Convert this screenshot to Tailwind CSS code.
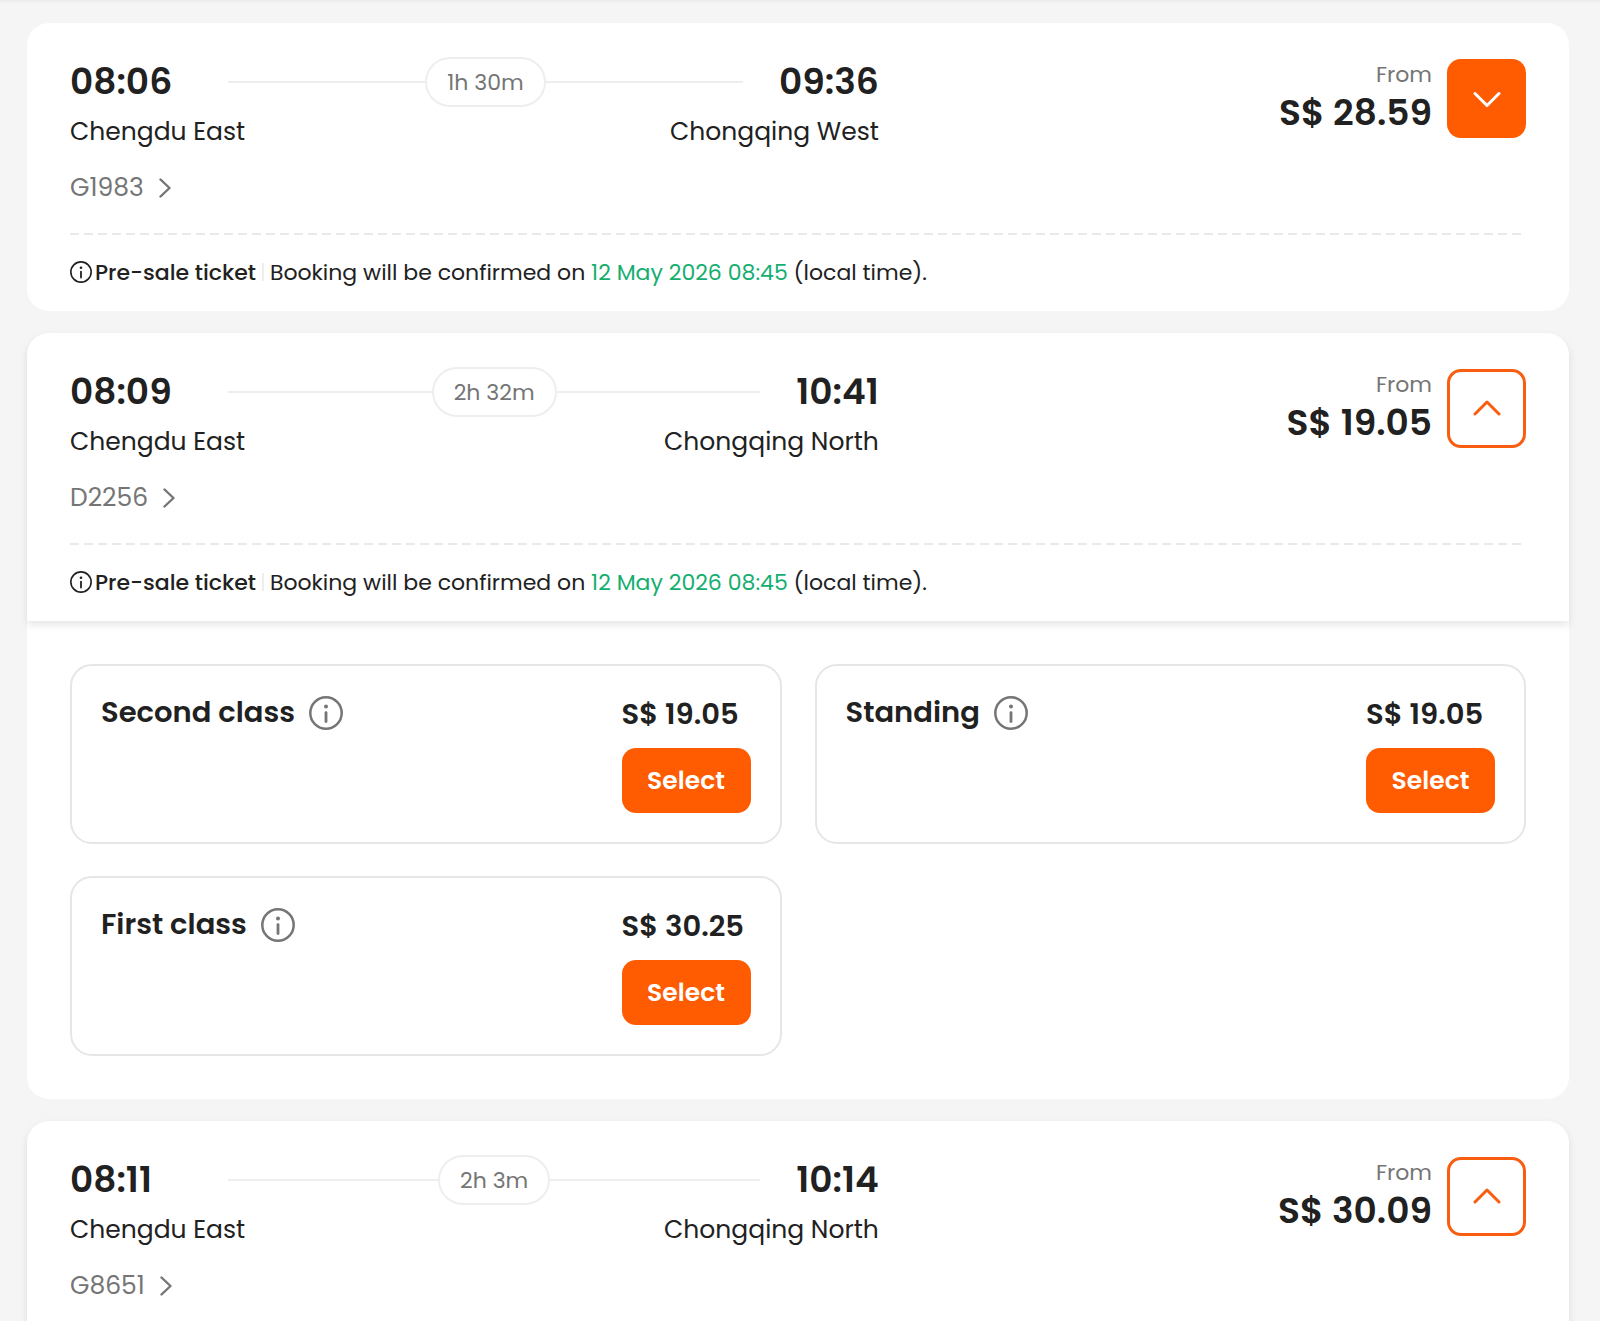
<!DOCTYPE html>
<html lang="en">
  <head>
    <meta charset="UTF-8" />
    <meta name="viewport" content="width=device-width, initial-scale=1.0" />
    <script src="https://cdn.jsdelivr.net/npm/@tailwindcss/browser@4"></script>
    <title>Chengdu to Chongqing trains</title>
  </head>
  <body
    class="bg-[#f5f5f5] text-[#212121] font-[Poppins,Inter,sans-serif] overflow-x-hidden"
  >
    <!-- icons -->
    <svg class="hidden">
      <symbol id="info" viewBox="0 0 34 34" fill="none">
        <circle cx="17" cy="17" r="15.7" stroke="currentColor" stroke-width="2.5" />
        <circle cx="17" cy="10.4" r="2" fill="currentColor" />
        <path d="M17 16.6v9" stroke="currentColor" stroke-width="2.8" stroke-linecap="round" />
      </symbol>
      <symbol id="down" viewBox="0 0 28 18" fill="none">
        <path d="M2 3.5l12 12 12-12" stroke="currentColor" stroke-width="3" stroke-linecap="round" stroke-linejoin="round" />
      </symbol>
      <symbol id="up" viewBox="0 0 28 18" fill="none">
        <path d="M2 14l12-12 12 12" stroke="currentColor" stroke-width="3" stroke-linecap="round" stroke-linejoin="round" />
      </symbol>
      <symbol id="right" viewBox="0 0 12 20" fill="none">
        <path d="M1.5 1.5l9 8.5-9 8.5" stroke="currentColor" stroke-width="2.4" stroke-linecap="round" stroke-linejoin="round" />
      </symbol>
    </svg>

    <!-- shadow of the bar above the list -->
    <div class="h-[3px] bg-linear-to-b from-[#ebebeb] to-[#f3f3f3]"></div>

    <main class="pt-5 pl-[27px] pr-[31px] space-y-[22px]">
      <!-- G1983 -->
      <article class="bg-white rounded-[22px]">
        <div class="px-[43px] pt-[34px]">
          <div class="flex justify-between items-start pb-[25px]">
            <div class="w-5/9">
              <div class="flex items-center h-[50px] gap-9">
                <p class="min-w-[122px] text-4xl font-semibold">08:06</p>
                <div class="flex flex-1 items-center">
                  <span class="flex-1 h-[2px] bg-[#eeeeee]"></span>
                  <span class="flex items-center h-[50px] px-5 border-2 border-[#eeeeee] rounded-full text-[22px] text-[#757575]">1h 30m</span>
                  <span class="flex-1 h-[2px] bg-[#eeeeee]"></span>
                </div>
                <p class="text-4xl font-semibold">09:36</p>
              </div>
              <div class="flex justify-between mt-[5px] text-[25px] leading-10">
                <p>Chengdu East</p>
                <p>Chongqing West</p>
              </div>
              <a href="#" class="inline-flex items-center gap-[15px] mt-4 h-10 text-[25px] leading-10 text-[#757575]">
                G1983
                <svg class="w-3 h-5"><use href="#right" /></svg>
              </a>
            </div>
            <div class="flex items-start gap-[15px] mt-[2px]">
              <div class="text-right">
                <p class="text-[22px] leading-8 text-[#757575]">From</p>
                <p class="text-4xl leading-11 font-semibold">S$ 28.59</p>
              </div>
              <button aria-label="Show fares" class="flex justify-center items-center size-[79px] rounded-[14px] bg-[#ff5b00] text-white">
                <svg class="w-7 h-[18px]"><use href="#down" /></svg>
              </button>
            </div>
          </div>
          <div class="h-[2px] bg-[repeating-linear-gradient(90deg,#e9e9e9_0_9px,transparent_9px_14px)]"></div>
          <div class="flex items-center h-[76px] pb-[2px] text-[22px]">
            <svg class="size-[22px]"><use href="#info" /></svg>
            <p class="ml-[3px] font-medium">Pre-sale ticket</p>
            <span class="mx-[6px] w-[2px] h-[18px] bg-[#eeeeee]"></span>
            <p>Booking will be confirmed on <span class="text-[#14ae70]">12 May 2026 08:45</span> (local time).</p>
          </div>
        </div>
      </article>

      <!-- D2256 -->
      <article class="bg-white rounded-[22px]">
        <div class="px-[43px] pt-[34px] rounded-t-[22px] shadow-[0_4px_8px_rgba(0,0,0,0.1)]">
          <div class="flex justify-between items-start pb-[25px]">
            <div class="w-5/9">
              <div class="flex items-center h-[50px] gap-9">
                <p class="min-w-[122px] text-4xl font-semibold">08:09</p>
                <div class="flex flex-1 items-center">
                  <span class="flex-1 h-[2px] bg-[#eeeeee]"></span>
                  <span class="flex items-center h-[50px] px-5 border-2 border-[#eeeeee] rounded-full text-[22px] text-[#757575]">2h 32m</span>
                  <span class="flex-1 h-[2px] bg-[#eeeeee]"></span>
                </div>
                <p class="text-4xl font-semibold">10:41</p>
              </div>
              <div class="flex justify-between mt-[5px] text-[25px] leading-10">
                <p>Chengdu East</p>
                <p>Chongqing North</p>
              </div>
              <a href="#" class="inline-flex items-center gap-[15px] mt-4 h-10 text-[25px] leading-10 text-[#757575]">
                D2256
                <svg class="w-3 h-5"><use href="#right" /></svg>
              </a>
            </div>
            <div class="flex items-start gap-[15px] mt-[2px]">
              <div class="text-right">
                <p class="text-[22px] leading-8 text-[#757575]">From</p>
                <p class="text-4xl leading-11 font-semibold">S$ 19.05</p>
              </div>
              <button aria-label="Hide fares" class="flex justify-center items-center size-[79px] rounded-[14px] border-3 border-[#f85d10] text-[#f85d10]">
                <svg class="w-7 h-[18px]"><use href="#up" /></svg>
              </button>
            </div>
          </div>
          <div class="h-[2px] bg-[repeating-linear-gradient(90deg,#e9e9e9_0_9px,transparent_9px_14px)]"></div>
          <div class="flex items-center h-[76px] pb-[2px] text-[22px]">
            <svg class="size-[22px]"><use href="#info" /></svg>
            <p class="ml-[3px] font-medium">Pre-sale ticket</p>
            <span class="mx-[6px] w-[2px] h-[18px] bg-[#eeeeee]"></span>
            <p>Booking will be confirmed on <span class="text-[#14ae70]">12 May 2026 08:45</span> (local time).</p>
          </div>
        </div>

        <!-- fares -->
        <div class="grid grid-cols-2 gap-x-[33px] gap-y-8 px-[43px] py-[43px]">
          <section class="flex justify-between h-[180px] px-[29px] pt-7 border-2 border-[#e6e6e6] rounded-[22px]">
            <div class="flex items-center gap-[14px] h-[37px]">
              <h2 class="text-[29px] font-semibold">Second class</h2>
              <button aria-label="About second class" class="text-[#757575]"><svg class="size-[34px]"><use href="#info" /></svg></button>
            </div>
            <div>
              <p class="text-[29px] leading-10 font-semibold">S$ 19.05</p>
              <button class="mt-[14px] w-[129px] h-[65px] rounded-[14px] bg-[#ff5b00] text-white text-[25px] font-semibold">Select</button>
            </div>
          </section>
          <section class="flex justify-between h-[180px] px-[29px] pt-7 border-2 border-[#e6e6e6] rounded-[22px]">
            <div class="flex items-center gap-[14px] h-[37px]">
              <h2 class="text-[29px] font-semibold">Standing</h2>
              <button aria-label="About standing" class="text-[#757575]"><svg class="size-[34px]"><use href="#info" /></svg></button>
            </div>
            <div>
              <p class="text-[29px] leading-10 font-semibold">S$ 19.05</p>
              <button class="mt-[14px] w-[129px] h-[65px] rounded-[14px] bg-[#ff5b00] text-white text-[25px] font-semibold">Select</button>
            </div>
          </section>
          <section class="flex justify-between h-[180px] px-[29px] pt-7 border-2 border-[#e6e6e6] rounded-[22px]">
            <div class="flex items-center gap-[14px] h-[37px]">
              <h2 class="text-[29px] font-semibold">First class</h2>
              <button aria-label="About first class" class="text-[#757575]"><svg class="size-[34px]"><use href="#info" /></svg></button>
            </div>
            <div>
              <p class="text-[29px] leading-10 font-semibold">S$ 30.25</p>
              <button class="mt-[14px] w-[129px] h-[65px] rounded-[14px] bg-[#ff5b00] text-white text-[25px] font-semibold">Select</button>
            </div>
          </section>
        </div>
      </article>

      <!-- G8651 -->
      <article class="bg-white rounded-t-[22px] shadow-[0_4px_8px_rgba(0,0,0,0.1)]">
        <div class="px-[43px] pt-[34px]">
          <div class="flex justify-between items-start pb-4">
            <div class="w-5/9">
              <div class="flex items-center h-[50px] gap-9">
                <p class="min-w-[122px] text-4xl font-semibold">08:11</p>
                <div class="flex flex-1 items-center">
                  <span class="flex-1 h-[2px] bg-[#eeeeee]"></span>
                  <span class="flex items-center h-[50px] px-5 border-2 border-[#eeeeee] rounded-full text-[22px] text-[#757575]">2h 3m</span>
                  <span class="flex-1 h-[2px] bg-[#eeeeee]"></span>
                </div>
                <p class="text-4xl font-semibold">10:14</p>
              </div>
              <div class="flex justify-between mt-[5px] text-[25px] leading-10">
                <p>Chengdu East</p>
                <p>Chongqing North</p>
              </div>
              <a href="#" class="inline-flex items-center gap-[15px] mt-4 h-10 text-[25px] leading-10 text-[#757575]">
                G8651
                <svg class="w-3 h-5"><use href="#right" /></svg>
              </a>
            </div>
            <div class="flex items-start gap-[15px] mt-[2px]">
              <div class="text-right">
                <p class="text-[22px] leading-8 text-[#757575]">From</p>
                <p class="text-4xl leading-11 font-semibold">S$ 30.09</p>
              </div>
              <button aria-label="Hide fares" class="flex justify-center items-center size-[79px] rounded-[14px] border-3 border-[#f85d10] text-[#f85d10]">
                <svg class="w-7 h-[18px]"><use href="#up" /></svg>
              </button>
            </div>
          </div>
        </div>
      </article>
    </main>
  </body>
</html>
